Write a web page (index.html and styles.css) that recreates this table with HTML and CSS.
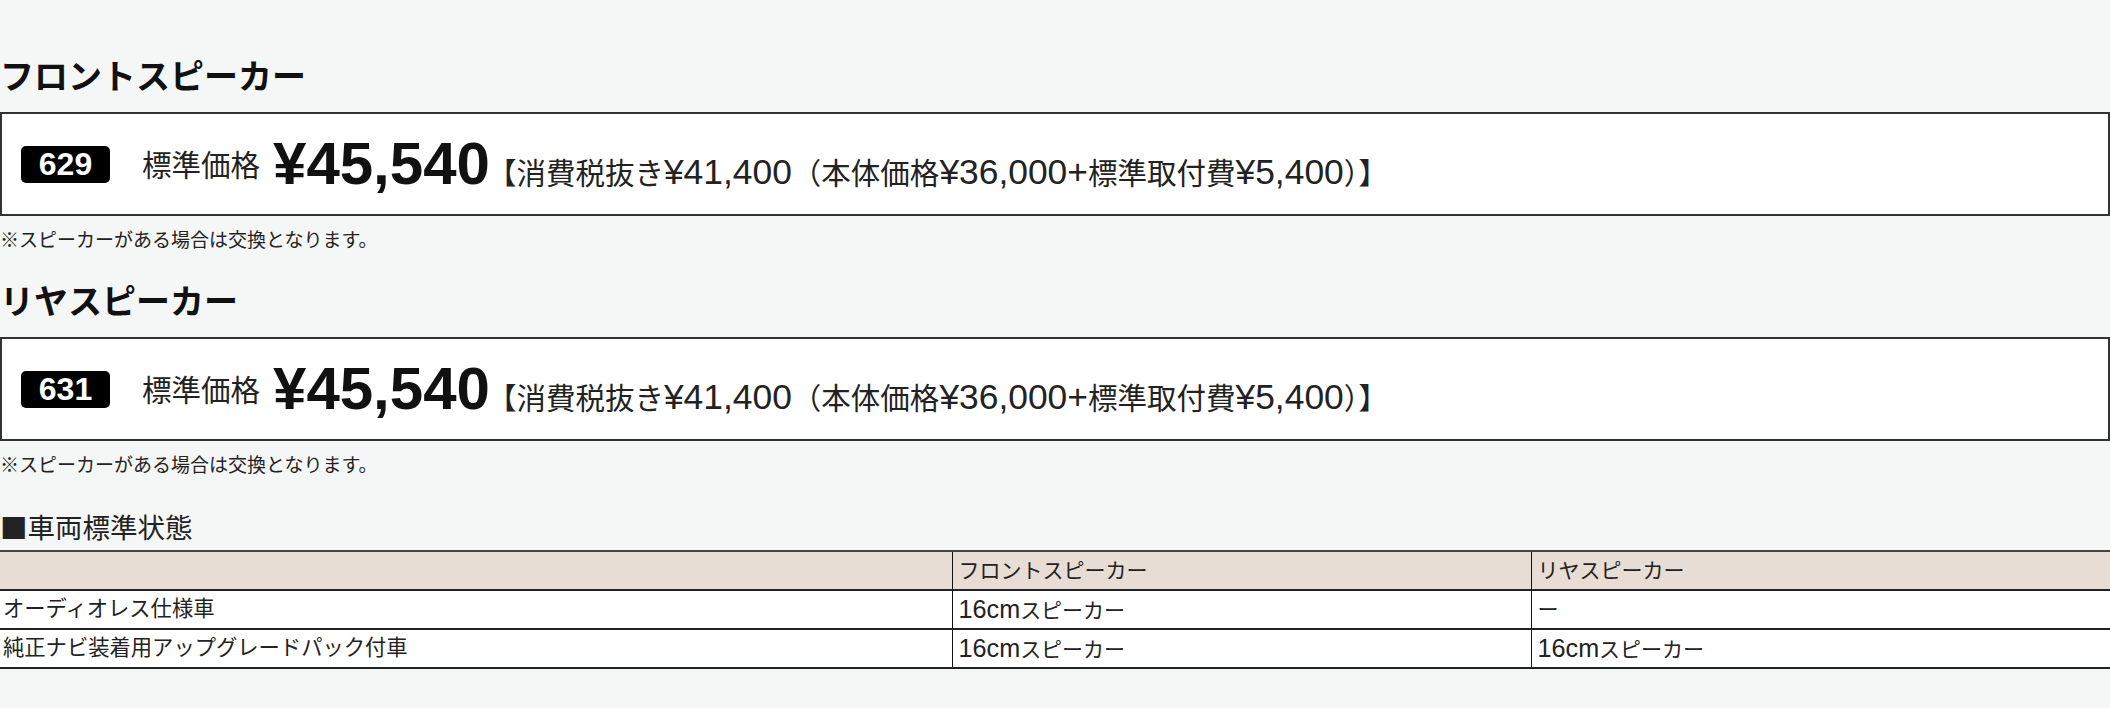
FILE: index.html
```html
<!DOCTYPE html>
<html lang="ja">
<head>
<meta charset="utf-8">
<title>スピーカー</title>
<link rel="stylesheet" href="styles.css">
</head>
<body>
<main class="page">
  <section class="option">
    <h2 class="option-title">フロントスピーカー</h2>
    <div class="price-box">
      <span class="badge">629</span>
      <span class="price-label">標準価格</span>
      <span class="price-line"><span class="price">¥45,540</span><span class="price-detail">【消費税抜き<span class="num">¥41,400</span>（本体価格<span class="num">¥36,000+</span>標準取付費<span class="num">¥5,400</span>）】</span></span>
    </div>
    <p class="note">※スピーカーがある場合は交換となります。</p>
  </section>
  <section class="option">
    <h2 class="option-title">リヤスピーカー</h2>
    <div class="price-box">
      <span class="badge">631</span>
      <span class="price-label">標準価格</span>
      <span class="price-line"><span class="price">¥45,540</span><span class="price-detail">【消費税抜き<span class="num">¥41,400</span>（本体価格<span class="num">¥36,000+</span>標準取付費<span class="num">¥5,400</span>）】</span></span>
    </div>
    <p class="note">※スピーカーがある場合は交換となります。</p>
  </section>
  <section class="standard">
    <h3 class="table-title">■車両標準状態</h3>
    <table class="spec">
      <colgroup>
        <col class="col-name">
        <col class="col-val">
        <col class="col-val">
      </colgroup>
      <thead>
        <tr><th></th><th>フロントスピーカー</th><th>リヤスピーカー</th></tr>
      </thead>
      <tbody>
        <tr><td>オーディオレス仕様車</td><td><span class="num">16cm</span>スピーカー</td><td>ー</td></tr>
        <tr><td>純正ナビ装着用アップグレードパック付車</td><td><span class="num">16cm</span>スピーカー</td><td><span class="num">16cm</span>スピーカー</td></tr>
      </tbody>
    </table>
  </section>
</main>
</body>
</html>
```

FILE: styles.css
```css
html, body {
  margin: 0;
  padding: 0;
}
body {
  background: #f5f7f6;
  color: #111;
  font-family: "Liberation Sans", "Noto Sans CJK JP", sans-serif;
}
.page {
  padding-top: 52px;
}
.option + .option {
  margin-top: 25px;
}
.option-title {
  margin: 0 0 10px;
  font-size: 34px;
  line-height: 50px;
  font-weight: 700;
  color: #111;
}
.price-box {
  display: flex;
  align-items: center;
  height: 100px;
  box-sizing: content-box;
  border: 2px solid #333;
  background: #fff;
  padding: 0 0 0 19px;
}
.badge {
  display: flex;
  align-items: center;
  justify-content: center;
  width: 89px;
  height: 37px;
  border-radius: 5px;
  background: #000;
  color: #fff;
  font-size: 32px;
  font-weight: 700;
  margin-right: 32px;
}
.price-label {
  font-family: "Noto Sans CJK JP", sans-serif;
  font-size: 29.5px;
  line-height: 1;
  font-weight: 400;
  margin-right: 13px;
  color: #222;
}
.price-line {
  font-size: 60px;
  line-height: 1;
  white-space: nowrap;
}
.price {
  font-size: 60px;
  font-weight: 700;
  color: #111;
}
.price-detail {
  font-size: 29.5px;
  line-height: 1;
  color: #222;
  margin-left: -3px;
}
.num {
  font-family: "Liberation Sans", sans-serif;
  font-size: 1.2em;
  line-height: 1;
}
.note {
  margin: 10px 0 0;
  font-family: "Noto Sans CJK JP", sans-serif;
  font-size: 19px;
  line-height: 26px;
  color: #222;
}
.standard {
  margin-top: 31px;
}
.table-title {
  margin: 0 0 6px;
  font-family: "Noto Sans CJK JP", sans-serif;
  font-size: 27.5px;
  line-height: 36px;
  font-weight: 400;
  color: #222;
}
.spec {
  width: 100%;
  border-collapse: collapse;
  table-layout: fixed;
  font-size: 21px;
  color: #222;
}
.col-name {
  width: 45.12%;
}
.spec th,
.spec td {
  height: 37px;
  padding: 0 6px;
  text-align: left;
  font-weight: 400;
  line-height: 1;
  border-top: 2px solid #222;
  border-bottom: 2px solid #222;
}
.spec td:first-child {
  padding-left: 3px;
  font-size: 21.3px;
}
.spec th + th,
.spec td + td {
  border-left: 1px solid #111;
}
.spec thead th {
  background: #e8ddd5;
  border-top-color: #444;
}
.spec tbody td {
  background: #fff;
}
```
